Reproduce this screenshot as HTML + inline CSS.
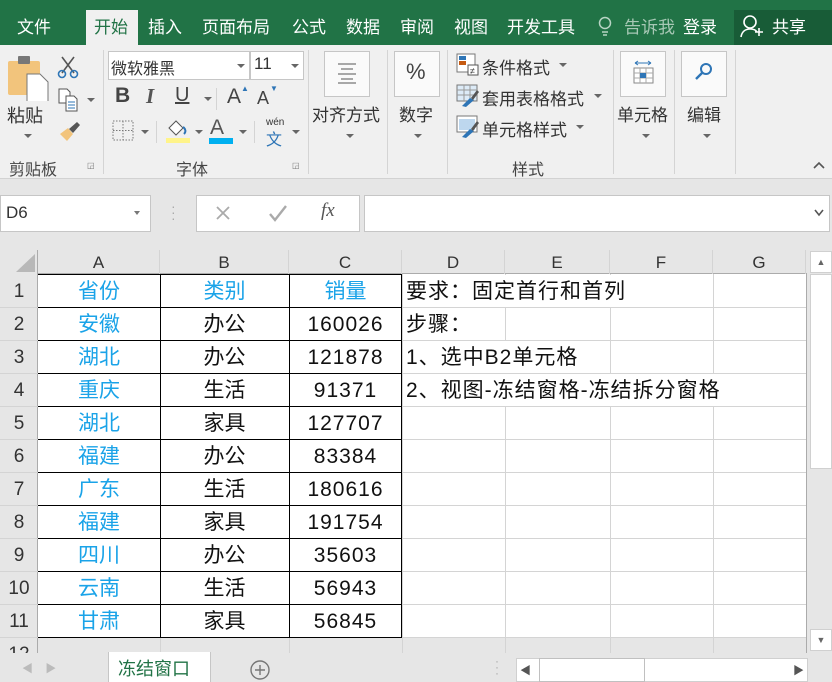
<!DOCTYPE html>
<html><head><meta charset="utf-8"><style>
*{margin:0;padding:0;box-sizing:border-box}
body{width:832px;height:682px;overflow:hidden;background:#e6e6e6;position:relative;font-family:"Liberation Sans","Noto Sans CJK SC",sans-serif;color:#222}
.a{position:absolute;white-space:nowrap}
.tab{color:#fff;font-size:17px;top:13px}
.rb{color:#333}
.gl{font-size:16px;color:#444}
.arr{position:absolute;width:0;height:0;border-left:4px solid transparent;border-right:4px solid transparent;border-top:4px solid #666}
.sep{position:absolute;width:1px;background:#d4d4d4}
.cell{position:absolute;font-size:21px;text-align:center;line-height:35px;color:#111}
.num{letter-spacing:1px}
.bl{color:#1aa3e8}
</style></head><body>
<div class="a" style="left:0;top:0;width:832px;height:45px;background:#217346"></div>
<div class="a" style="left:86px;top:10px;width:52px;height:36px;background:#f0f0f0"></div>
<div class="a" style="left:734px;top:10px;width:98px;height:35px;background:#185c37"></div>
<div class="a tab" style="left:17px">文件</div>
<div class="a tab" style="left:94px;color:#217346">开始</div>
<div class="a tab" style="left:148px">插入</div>
<div class="a tab" style="left:202px">页面布局</div>
<div class="a tab" style="left:292px">公式</div>
<div class="a tab" style="left:346px">数据</div>
<div class="a tab" style="left:400px">审阅</div>
<div class="a tab" style="left:454px">视图</div>
<div class="a tab" style="left:507px">开发工具</div>
<svg class="a" style="left:598px;top:16px" width="14" height="22"><circle cx="7" cy="7" r="5.5" fill="none" stroke="#b8d4c4" stroke-width="1.5"/><path d="M4 16h6M5 19h4" stroke="#b8d4c4" stroke-width="1.5"/></svg>
<div class="a tab" style="left:624px;color:#a7c8b5">告诉我</div>
<div class="a tab" style="left:683px">登录</div>
<svg class="a" style="left:740px;top:14px" width="26" height="24"><circle cx="10" cy="8" r="6" fill="none" stroke="#fff" stroke-width="1.6"/><path d="M1 23c1-6 5-8 9-8s6 1 7 3M19 14v8M15 18h8" fill="none" stroke="#fff" stroke-width="1.6"/></svg>
<div class="a tab" style="left:772px">共享</div>
<div class="a" style="left:0;top:45px;width:832px;height:134px;background:#f0f0f0;border-bottom:1px solid #d2d2d2"></div>
<svg class="a" style="left:7px;top:53px" width="44" height="48"><rect x="1" y="8" width="32" height="34" rx="2" fill="#f2c47c"/><rect x="11" y="3" width="12" height="8" rx="1" fill="#777"/><path d="M20 21h13l8 8v20H20z" fill="#fff" stroke="#777"/></svg>
<div class="a rb" style="left:7px;top:102px;font-size:18px">粘贴</div>
<div class="arr" style="left:24px;top:134px"></div>
<svg class="a" style="left:57px;top:55px" width="22" height="24"><path d="M5 2l12 16M17 2L5 18" stroke="#555" stroke-width="1.6"/><circle cx="5" cy="19" r="3.5" fill="none" stroke="#2e75b6" stroke-width="1.6"/><circle cx="17" cy="19" r="3.5" fill="none" stroke="#2e75b6" stroke-width="1.6"/></svg>
<svg class="a" style="left:58px;top:88px" width="22" height="24"><path d="M1 1h8l3 3v11H1z" fill="#fff" stroke="#555"/><path d="M8 8h8l3 3v12H8z" fill="#fff" stroke="#555"/><path d="M10 14h7M10 17h7M10 20h7" stroke="#2e75b6"/></svg>
<div class="arr" style="left:87px;top:98px"></div>
<svg class="a" style="left:57px;top:120px" width="24" height="22"><path d="M3 14l8-6 5 6-6 7z" fill="#f2c47c"/><path d="M12 9l8-7 3 3-7 8z" fill="#555"/></svg>
<div class="a gl" style="left:9px;top:156px">剪贴板</div>
<div class="a" style="left:87px;top:161px;font-size:8px;color:#777">◲</div>
<div class="sep" style="left:103px;top:50px;height:124px"></div>
<div class="a" style="left:108px;top:51px;width:142px;height:29px;background:#fff;border:1px solid #c6c6c6"></div>
<div class="a" style="left:250px;top:51px;width:54px;height:29px;background:#fff;border:1px solid #c6c6c6"></div>
<div class="a" style="left:111px;top:55px;font-size:16px;color:#333">微软雅黑</div>
<div class="arr" style="left:237px;top:64px"></div>
<div class="a" style="left:254px;top:54px;font-size:17px;color:#333">11</div>
<div class="arr" style="left:291px;top:64px"></div>
<div class="a" style="left:115px;top:84px;font-size:21px;font-weight:bold;color:#444">B</div>
<div class="a" style="left:146px;top:84px;font-size:21px;font-style:italic;font-family:'Liberation Serif',serif;font-weight:bold;color:#555">I</div>
<div class="a" style="left:175px;top:84px;font-size:20px;text-decoration:underline;color:#444">U</div>
<div class="arr" style="left:204px;top:97px"></div>
<div class="sep" style="left:216px;top:88px;height:22px"></div>
<div class="a" style="left:227px;top:85px;font-size:21px;color:#444">A</div>
<div class="a" style="left:241px;top:84px;font-size:8px;color:#2e75b6">▲</div>
<div class="a" style="left:257px;top:88px;font-size:18px;color:#444">A</div>
<div class="a" style="left:270px;top:84px;font-size:8px;color:#2e75b6">▼</div>
<svg class="a" style="left:112px;top:120px" width="22" height="21"><rect x="1" y="1" width="20" height="19" fill="none" stroke="#777" stroke-dasharray="1.5 1.5"/><path d="M11 1v19M1 10.5h20" stroke="#777" stroke-dasharray="1.5 1.5"/></svg>
<div class="arr" style="left:141px;top:130px"></div>
<div class="sep" style="left:156px;top:121px;height:22px"></div>
<svg class="a" style="left:165px;top:118px" width="26" height="26"><path d="M4 10l7-7 7 7-7 7z" fill="#fff" stroke="#555"/><path d="M18 9c3 2 3 5 1 7" stroke="#2e75b6" stroke-width="2" fill="none"/><rect x="1" y="20" width="24" height="5" fill="#fff48a"/></svg>
<div class="arr" style="left:195px;top:130px"></div>
<div class="a" style="left:210px;top:116px;font-size:21px;color:#555">A</div>
<div class="a" style="left:209px;top:138px;width:24px;height:6px;background:#00b0f0"></div>
<div class="arr" style="left:239px;top:130px"></div>
<div class="sep" style="left:254px;top:121px;height:22px"></div>
<div class="a" style="left:266px;top:117px;font-size:10px;color:#333">wén</div>
<div class="a" style="left:266px;top:126px;font-size:16px;color:#2e75b6">文</div>
<div class="arr" style="left:292px;top:130px"></div>
<div class="a gl" style="left:176px;top:156px">字体</div>
<div class="a" style="left:292px;top:161px;font-size:8px;color:#777">◲</div>
<div class="sep" style="left:308px;top:50px;height:124px"></div>
<div class="a" style="left:324px;top:51px;width:46px;height:46px;background:#fafafa;border:1px solid #c6c6c6"></div>
<svg class="a" style="left:336px;top:62px" width="22" height="22"><path d="M2 2h18M5 7h12M2 12h18M5 17h12M2 21h18" stroke="#555"/></svg>
<div class="a rb" style="left:312px;top:101px;font-size:17px">对齐方式</div>
<div class="arr" style="left:346px;top:134px"></div>
<div class="sep" style="left:387px;top:50px;height:124px"></div>
<div class="a" style="left:394px;top:51px;width:46px;height:46px;background:#fafafa;border:1px solid #c6c6c6"></div>
<div class="a" style="left:406px;top:59px;font-size:22px;color:#444">%</div>
<div class="a rb" style="left:399px;top:101px;font-size:17px">数字</div>
<div class="arr" style="left:414px;top:134px"></div>
<div class="sep" style="left:447px;top:50px;height:124px"></div>
<svg class="a" style="left:456px;top:53px" width="24" height="24"><rect x="1" y="1" width="18" height="18" fill="#fff" stroke="#777"/><rect x="3" y="3" width="7" height="4" fill="#2e75b6"/><rect x="3" y="8" width="7" height="4" fill="#c55a11"/><rect x="12" y="12" width="10" height="10" fill="#fff" stroke="#555"/><text x="14" y="21" font-size="9" fill="#333">≠</text></svg>
<div class="a rb" style="left:482px;top:54px;font-size:17px">条件格式</div>
<div class="arr" style="left:559px;top:63px"></div>
<svg class="a" style="left:456px;top:84px" width="24" height="24"><rect x="1" y="1" width="20" height="16" fill="#ddebf7" stroke="#777"/><path d="M1 6h20M1 11h20M8 1v16M14 1v16" stroke="#999"/><path d="M6 22l8-8 4 2-8 7z" fill="#2e75b6"/><path d="M15 14l6-8 2 2-6 8z" fill="#555"/></svg>
<div class="a rb" style="left:482px;top:85px;font-size:17px">套用表格格式</div>
<div class="arr" style="left:594px;top:94px"></div>
<svg class="a" style="left:456px;top:115px" width="24" height="24"><rect x="1" y="1" width="20" height="16" fill="#fff" stroke="#777"/><rect x="3" y="4" width="16" height="11" fill="#bdd7ee"/><path d="M6 22l8-8 4 2-8 7z" fill="#2e75b6"/><path d="M15 14l6-8 2 2-6 8z" fill="#555"/></svg>
<div class="a rb" style="left:482px;top:116px;font-size:17px">单元格样式</div>
<div class="arr" style="left:576px;top:125px"></div>
<div class="a gl" style="left:512px;top:156px">样式</div>
<div class="sep" style="left:613px;top:50px;height:124px"></div>
<div class="a" style="left:620px;top:51px;width:46px;height:46px;background:#fafafa;border:1px solid #c6c6c6"></div>
<svg class="a" style="left:632px;top:59px" width="24" height="28"><path d="M3 4h16M3 4l3-2M3 4l3 2M19 4l-3-2M19 4l-3 2" stroke="#2e75b6" fill="none"/><rect x="2" y="9" width="19" height="15" fill="#fff" stroke="#888"/><path d="M2 14h19M2 19h19M8 9v15M14 9v15" stroke="#aaa"/><rect x="8" y="14" width="6" height="5" fill="#2e75b6"/></svg>
<div class="a rb" style="left:617px;top:101px;font-size:17px">单元格</div>
<div class="arr" style="left:642px;top:134px"></div>
<div class="sep" style="left:674px;top:50px;height:124px"></div>
<div class="a" style="left:681px;top:51px;width:46px;height:46px;background:#fafafa;border:1px solid #c6c6c6"></div>
<svg class="a" style="left:694px;top:62px" width="20" height="20"><circle cx="12" cy="7" r="5" fill="none" stroke="#2e75b6" stroke-width="2"/><path d="M8 11l-6 6" stroke="#2e75b6" stroke-width="2.4"/></svg>
<div class="a rb" style="left:687px;top:101px;font-size:17px">编辑</div>
<div class="arr" style="left:703px;top:134px"></div>
<div class="sep" style="left:735px;top:50px;height:124px"></div>
<svg class="a" style="left:812px;top:160px" width="14" height="10"><path d="M2 8l5-5 5 5" stroke="#555" stroke-width="1.6" fill="none"/></svg>
<div class="a" style="left:0;top:195px;width:151px;height:37px;background:#fff;border:1px solid #c6c6c6"></div>
<div class="a" style="left:6px;top:203px;font-size:17px;color:#333">D6</div>
<div class="arr" style="left:134px;top:211px;border-top-color:#777;border-left-width:3px;border-right-width:3px"></div>
<div class="a" style="left:171px;top:203px;font-size:14px;color:#aaa;line-height:6px">·<br>·<br>·</div>
<div class="a" style="left:196px;top:195px;width:164px;height:37px;background:#fff;border:1px solid #c6c6c6"></div>
<svg class="a" style="left:215px;top:205px" width="16" height="16"><path d="M2 2l12 12M14 2L2 14" stroke="#aaa" stroke-width="1.8"/></svg>
<svg class="a" style="left:268px;top:204px" width="20" height="18"><path d="M2 10l5 6L18 2" stroke="#aaa" stroke-width="2.4" fill="none"/></svg>
<div class="a" style="left:321px;top:200px;font-size:19px;font-style:italic;font-family:'Liberation Serif',serif;color:#555">fx</div>
<div class="a" style="left:364px;top:195px;width:466px;height:37px;background:#fff;border:1px solid #c6c6c6"></div>
<svg class="a" style="left:814px;top:209px" width="10" height="8"><path d="M1 1l4 5 4-5" stroke="#555" stroke-width="1.6" fill="none"/></svg>
<div class="a" style="left:0;top:250px;width:807px;height:387px;background:#fff"></div>
<div class="a" style="left:0;top:250px;width:807px;height:24px;background:#e6e6e6;border-bottom:1px solid #ababab"></div>
<div class="a" style="left:0;top:250px;width:38px;height:410px;background:#e6e6e6;border-right:1px solid #ababab"></div>
<svg class="a" style="left:14px;top:253px" width="22" height="20"><path d="M21 1v18H2z" fill="#b8b8b8"/></svg>
<div id="g"></div>
<div class="a" style="left:807px;top:250px;width:25px;height:403px;background:#e6e6e6"></div>
<div class="a" style="left:810px;top:251px;width:22px;height:22px;background:#fff;border:1px solid #d0d0d0;font-size:9px;text-align:center;line-height:20px;color:#666">▲</div>
<div class="a" style="left:810px;top:274px;width:22px;height:195px;background:#fff;border:1px solid #d0d0d0"></div>
<div class="a" style="left:810px;top:629px;width:22px;height:22px;background:#fff;border:1px solid #d0d0d0;font-size:9px;text-align:center;line-height:20px;color:#666">▼</div>
<div class="a" style="left:0;top:653px;width:832px;height:29px;background:#e6e6e6"></div>
<div class="a" style="left:22px;top:660px;font-size:11px;color:#bbb">◀ &nbsp;&nbsp; ▶</div>
<div class="a" style="left:108px;top:652px;width:103px;height:30px;background:#fff;border-left:1px solid #c6c6c6;border-right:1px solid #c6c6c6"></div>
<div class="a" style="left:118px;top:655px;font-size:18px;color:#217346">冻结窗口</div>
<svg class="a" style="left:249px;top:659px" width="22" height="22"><circle cx="11" cy="11" r="9" fill="none" stroke="#777" stroke-width="1.4"/><path d="M11 6v10M6 11h10" stroke="#777" stroke-width="1.4"/></svg>
<div class="a" style="left:495px;top:658px;font-size:12px;color:#aaa;line-height:6px">·<br>·<br>·</div>
<div class="a" style="left:516px;top:658px;width:292px;height:24px;background:#fff;border:1px solid #d0d0d0"></div>
<div class="a" style="left:539px;top:658px;width:106px;height:24px;background:#fff;border:1px solid #c0c0c0"></div>
<div class="a" style="left:520px;top:662px;font-size:11px;color:#555">◀</div>
<div class="a" style="left:793px;top:662px;font-size:11px;color:#555">▶</div>
<script>
var cols=[38,160,289,402,505,610,713,806],L="ABCDEFG",h="",g=document.getElementById('g');
for(var i=0;i<7;i++){h+='<div class="a" style="left:'+cols[i]+'px;top:250px;width:'+(cols[i+1]-cols[i])+'px;height:24px;text-align:center;font-size:17px;line-height:26px;color:#333;border-right:1px solid #d4d4d4">'+L[i]+'</div>';
h+='<div class="a" style="left:'+cols[i+1]+'px;top:274px;width:1px;height:379px;background:#d4d4d4"></div>';}
for(var r=0;r<12;r++){var y=274+33*r;h+='<div class="a" style="left:0;top:'+(y+33)+'px;width:807px;height:1px;background:#d4d4d4"></div>';
h+='<div class="a" style="left:0;top:'+y+'px;width:38px;height:33px;text-align:center;font-size:19px;line-height:36px;color:#333">'+(r+1)+'</div>';}
var d=[["省份","类别","销量"],["安徽","办公","160026"],["湖北","办公","121878"],["重庆","生活","91371"],["湖北","家具","127707"],["福建","办公","83384"],["广东","生活","180616"],["福建","家具","191754"],["四川","办公","35603"],["云南","生活","56943"],["甘肃","家具","56845"]];
h+='<div class="a" style="left:38px;top:274px;width:364px;height:364px;border:1px solid #000;border-left:none"></div>';
for(var r=0;r<11;r++){var y=274+33*r;
if(r<10)h+='<div class="a" style="left:38px;top:'+(y+33)+'px;width:364px;height:1px;background:#000"></div>';
for(var c=0;c<3;c++){h+='<div class="cell '+((r==0||c==0)?'bl':'')+(c==2&&r>0?' num':'')+'" style="left:'+cols[c]+'px;top:'+y+'px;width:'+(cols[c+1]-cols[c])+'px">'+d[r][c]+'</div>';}}
h+='<div class="a" style="left:160px;top:274px;width:1px;height:363px;background:#000"></div><div class="a" style="left:289px;top:274px;width:1px;height:363px;background:#000"></div>';
var t=["要求：固定首行和首列","步骤：","1、选中B2单元格","2、视图-冻结窗格-冻结拆分窗格"];
for(var k=0;k<4;k++)h+='<div class="a" style="left:406px;top:'+(274+33*k+1)+'px;height:32px;line-height:34px;font-size:21px;letter-spacing:1px;background:#fff;padding-right:2px;color:#111">'+t[k]+'</div>';
h+='<div class="a" style="left:806px;top:274px;width:1px;height:379px;background:#ababab"></div>';
g.innerHTML=h;
</script>
</body></html>
